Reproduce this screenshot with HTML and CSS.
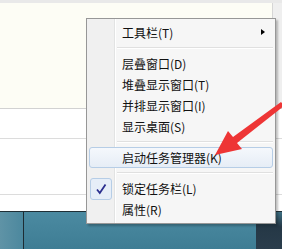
FILE: index.html
```html
<!DOCTYPE html>
<html lang="zh-CN">
<head>
    <meta charset="UTF-8">
    <meta name="viewport" content="width=device-width, initial-scale=1.0">
    <title>任务栏右键菜单</title>
    <link rel="stylesheet" href="styles.css">
</head>
<body>
    <div class="desk">
        <div class="win">
            <div class="win-top"></div>
            <div class="win-body">
                <div class="pane"></div>
                <div class="side"></div>
            </div>
            <div class="rows">
                <div class="row r1"></div>
                <div class="row r2"></div>
                <div class="row r3"></div>
            </div>
        </div>
        <div class="taskbar">
            <div class="start"></div>
            <div class="bar"></div>
            <div class="tray"></div>
        </div>

        <!-- 右键菜单 -->
        <div class="menu">
            <div class="item">工具栏(T)<span class="sub"></span></div>
            <div class="sep"></div>
            <div class="item">层叠窗口(D)</div>
            <div class="item">堆叠显示窗口(T)</div>
            <div class="item">并排显示窗口(I)</div>
            <div class="item">显示桌面(S)</div>
            <div class="sep"></div>
            <div class="item hot">启动任务管理器(K)</div>
            <div class="sep"></div>
            <div class="item">
                <span class="check">
                    <svg width="12" height="12" viewBox="0 0 12 12"><path d="M2 6.5 L4.8 10 L10.5 1.5" fill="none" stroke="#2b2f8f" stroke-width="1.8"/></svg>
                </span>锁定任务栏(L)
            </div>
            <div class="item">属性(R)</div>
        </div>

        <svg class="arrow" width="282" height="249" viewBox="0 0 282 249">
            <polygon points="215,155 228,131 233,137 281,102 284,106 237,143 242,149" fill="#ee3535"/>
        </svg>
    </div>
</body>
</html>
```

FILE: styles.css
```css
body {
    margin: 0;
    font-family: "Noto Sans CJK SC", "Noto Sans", sans-serif;
    background: #fff;
}
.desk {
    position: relative;
    width: 282px;
    height: 249px;
    overflow: hidden;
}
.win-top {
    height: 3px;
    background: #e9e9e9;
}
.win-body {
    display: flex;
    height: 105px;
    border-bottom: 1px solid #d2d2d2;
}
.pane {
    flex: 1;
    background: #fdfdf5;
    border-right: 1px solid #d6d6d6;
}
.side {
    width: 9px;
    background: #efefef;
}
.row {
    border-bottom: 1px solid #dcdcdc;
}
.r1 { height: 29px; }
.r2 { height: 55px; }
.r3 { height: 16px; border-bottom: none; }
.taskbar {
    display: flex;
    height: 37px;
    border-top: 1px solid #1f2f36;
    background: #43809a;
}
.start {
    width: 23px;
    border-right: 1px solid #1d2c33;
    background: linear-gradient(90deg, #5f93a6, #4c889e);
}
.bar {
    flex: 1;
    background: linear-gradient(180deg, #4b8aa1, #3e7d94);
}
.tray {
    width: 26px;
    background: linear-gradient(180deg, #3e6f82 0, #253846 40%, #2a3d4c 100%);
}

.menu {
    position: absolute;
    left: 86px;
    top: 18px;
    width: 188px;
    padding: 3px 0;
    border: 1px solid #979797;
    background: linear-gradient(90deg, #f0f0f0 0, #f0f0f0 27px, #e2e3e3 27px, #e2e3e3 28px, #fff 28px, #fff 29px, #f6f6f6 29px);
    box-shadow: 2px 2px 2px rgba(0,0,0,0.25);
    font-size: 12px;
    color: #111;
}
.item {
    position: relative;
    height: 21px;
    line-height: 21px;
    padding-left: 33px;
    margin: 0 2px;
    white-space: nowrap;
}
.sep {
    height: 10px;
    margin-left: 30px;
    margin-right: 2px;
    background: linear-gradient(180deg, transparent 4px, #e0e0e0 4px, #e0e0e0 5px, #fff 5px, #fff 6px, transparent 6px);
}
.hot {
    height: 19px;
    line-height: 19px;
    padding-left: 32px;
    border: 1px solid #b6cde6;
    border-radius: 3px;
    background: linear-gradient(180deg, #f5f8fc, #e6edf6);
}
.sub {
    position: absolute;
    right: 8px;
    top: 7px;
    width: 0;
    height: 0;
    border-left: 4px solid #000;
    border-top: 3.5px solid transparent;
    border-bottom: 3.5px solid transparent;
}
.check {
    position: absolute;
    left: 1px;
    top: 0;
    width: 20px;
    height: 20px;
    border: 1px solid #b6cde6;
    border-radius: 3px;
    background: #e6eef8;
    display: flex;
    align-items: center;
    justify-content: center;
}
.arrow {
    position: absolute;
    left: 0;
    top: 0;
}
```
